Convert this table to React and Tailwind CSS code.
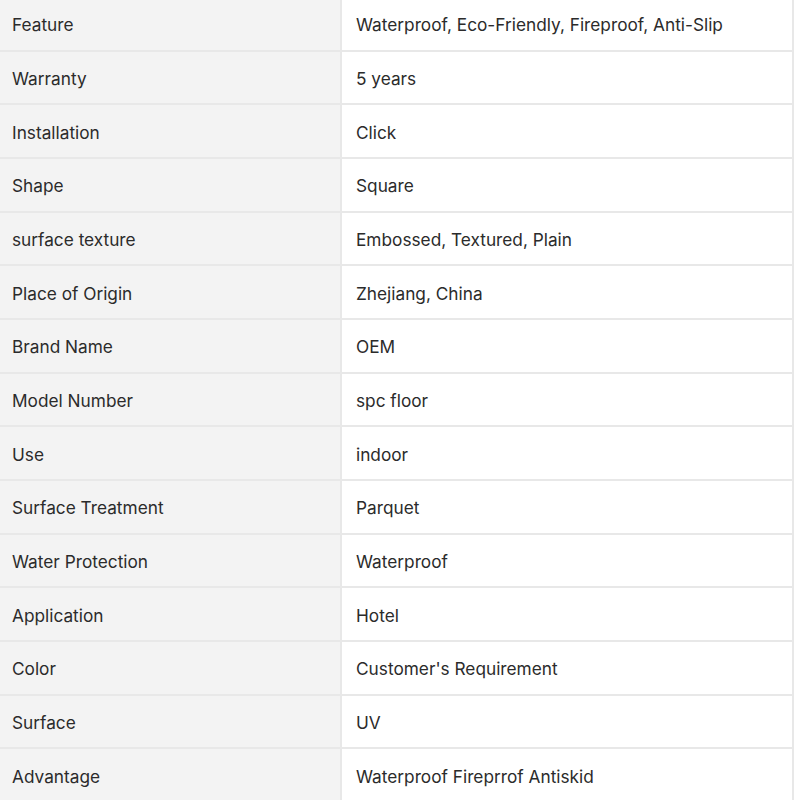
const rows = [
  ["Feature", "Waterproof, Eco-Friendly, Fireproof, Anti-Slip"],
  ["Warranty", "5 years"],
  ["Installation", "Click"],
  ["Shape", "Square"],
  ["surface texture", "Embossed, Textured, Plain"],
  ["Place of Origin", "Zhejiang, China"],
  ["Brand Name", "OEM"],
  ["Model Number", "spc floor"],
  ["Use", "indoor"],
  ["Surface Treatment", "Parquet"],
  ["Water Protection", "Waterproof"],
  ["Application", "Hotel"],
  ["Color", "Customer's Requirement"],
  ["Surface", "UV"],
  ["Advantage", "Waterproof Fireprrof Antiskid"],
];

const App = () => {
  return (
    <div className="h-[800px] w-[800px] overflow-hidden bg-white font-['Inter',sans-serif] text-[17.25px] text-[#2b2b2b]">
      <div className="-mt-[2px] w-[794px] border-r-2 border-[#e8e8e8]">
        {rows.map(([label, value]) => (
          <div
            key={label}
            className="flex h-[53.67px] border-b-2 border-[#e8e8e8]"
          >
            <div className="flex w-[342px] flex-none items-center border-r-2 border-[#e8e8e8] bg-[#f3f3f3] pl-3 pt-[3px]">
              {label}
            </div>
            <div className="flex flex-1 items-center pl-[14px] pt-[3px]">{value}</div>
          </div>
        ))}
      </div>
    </div>
  );
};

export default App;
